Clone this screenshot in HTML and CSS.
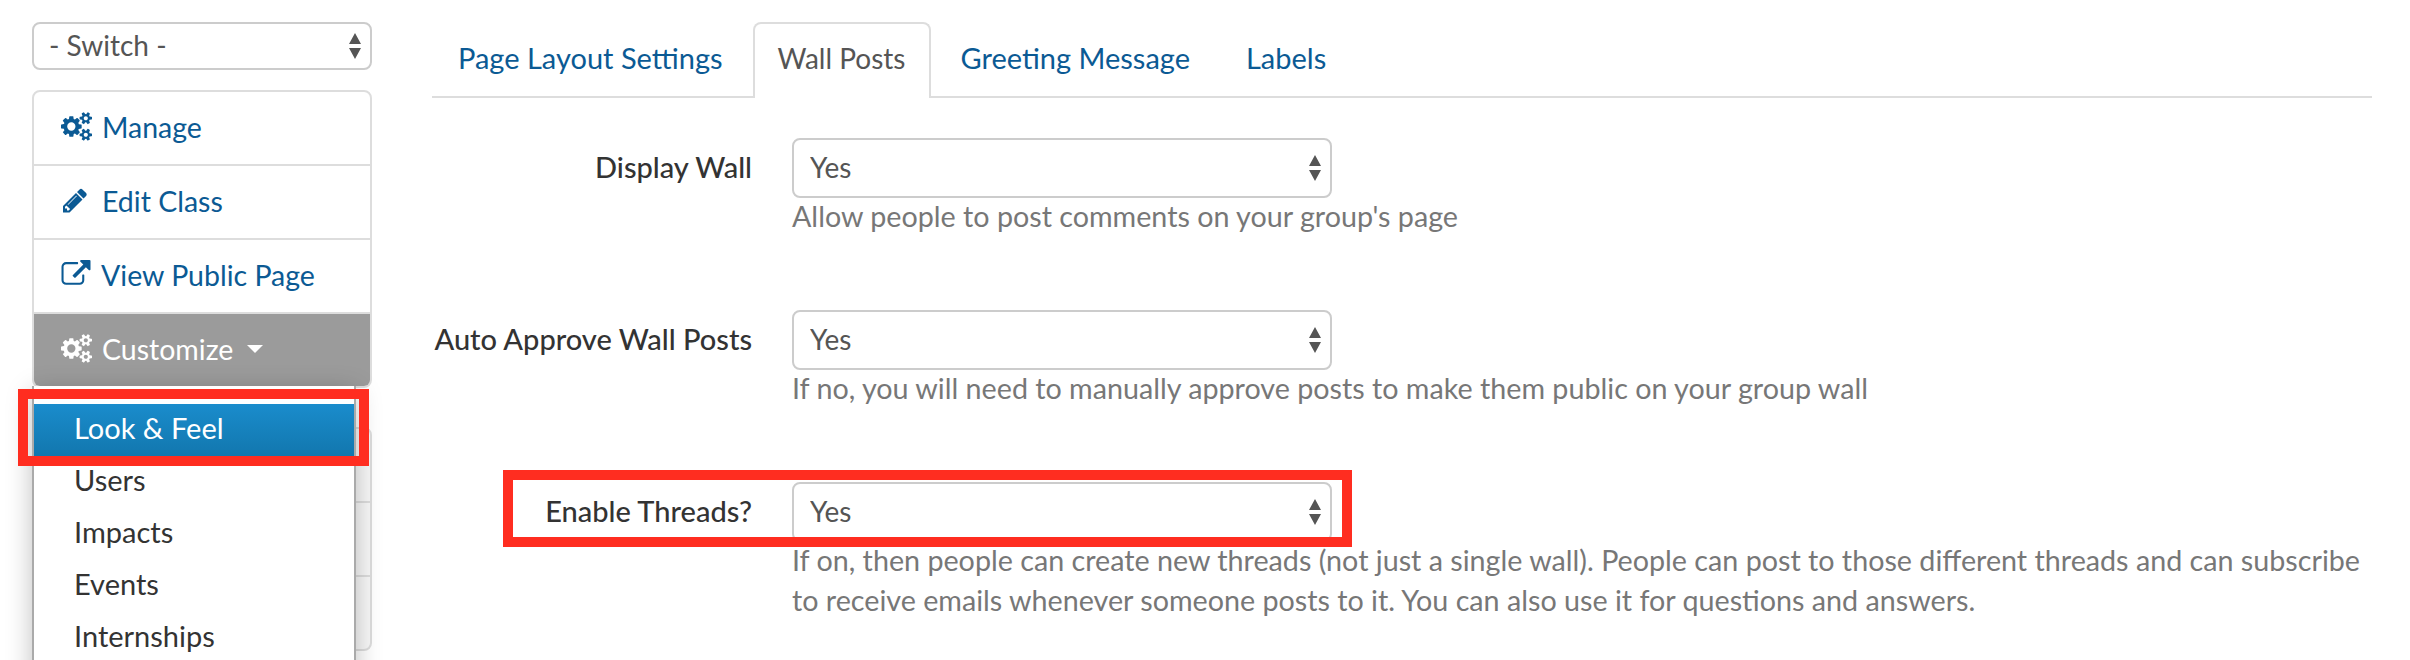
FILE: index.html
```html
<!DOCTYPE html>
<html lang="en">
<head>
    <meta charset="UTF-8">
    <title>Wall Posts</title>
    <link rel="stylesheet" href="styles.css">
</head>
<body>
    <svg class="defs" width="0" height="0">
        <symbol id="cogs" viewBox="0 0 1920 1792"><path d="M896 896q0-106-75-181t-181-75-181 75-75 181 75 181 181 75 181-75 75-181zm768 512q0-52-38-90t-90-38-90 38-38 90q0 53 37.500 90.500t90.500 37.500 90.500-37.500 37.500-90.500zm0-1024q0-52-38-90t-90-38-90 38-38 90q0 53 37.500 90.500t90.500 37.500 90.500-37.500 37.500-90.500zm-384 421v185q0 10-7 19.500t-16 10.500l-155 24q-11 35-32 76 34 48 90 115 7 11 7 20 0 12-7 19-23 30-82.500 89.500t-78.500 59.500q-11 0-21-7l-115-90q-37 19-77 31-11 108-23 155-7 24-30 24h-186q-11 0-20-7.500t-10-17.500l-23-153q-34-10-75-31l-118 89q-7 7-20 7-11 0-21-8-144-133-144-160 0-9 7-19 10-14 41-53t47-61q-23-44-35-82l-152-24q-10-1-17-9.500t-7-19.500v-185q0-10 7-19.500t16-10.500l155-24q11-35 32-76-34-48-90-115-7-11-7-20 0-12 7-20 22-30 82-89t79-59q11 0 21 7l115 90q34-18 77-32 11-108 23-154 7-24 30-24h186q11 0 20 7.500t10 17.500l23 153q34 10 75 31l118-89q8-7 20-7 11 0 21 8 144 133 144 160 0 8-7 19-12 16-42 54t-45 60q23 48 34 82l152 23q10 2 17 10.500t7 19.500zm640 533v140q0 16-149 31-12 27-30 52 51 113 51 138 0 4-4 7-122 71-124 71-8 0-46-47t-52-68q-20 2-30 2t-30-2q-14 21-52 68t-46 47q-2 0-124-71-4-3-4-7 0-25 51-138-18-25-30-52-149-15-149-31v-140q0-16 149-31 13-29 30-52-51-113-51-138 0-4 4-7 4-2 35-20t59-34 30-16q8 0 46 46.500t52 67.500q20-2 30-2t30 2q51-71 92-112l6-2q4 0 124 70 4 3 4 7 0 25-51 138 17 23 30 52 149 15 149 31zm0-1024v140q0 16-149 31-12 27-30 52 51 113 51 138 0 4-4 7-122 71-124 71-8 0-46-47t-52-68q-20 2-30 2t-30-2q-14 21-52 68t-46 47q-2 0-124-71-4-3-4-7 0-25 51-138-18-25-30-52-149-15-149-31v-140q0-16 149-31 13-29 30-52-51-113-51-138 0-4 4-7 4-2 35-20t59-34 30-16q8 0 46 46.500t52 67.500q20-2 30-2t30 2q51-71 92-112l6-2q4 0 124 70 4 3 4 7 0 25-51 138 17 23 30 52 149 15 149 31z"/></symbol>
        <symbol id="pencil" viewBox="0 0 1792 1792"><path d="M491 1536l91-91-235-235-91 91v107h128v128h107zm523-928q0-22-22-22-10 0-17 7l-542 542q-7 7-7 17 0 22 22 22 10 0 17-7l542-542q7-7 7-17zm-54-192l416 416-832 832h-416v-416zm683 96q0 53-37 90l-166 166-416-416 166-165q36-38 90-38 53 0 91 38l235 234q37 39 37 91z"/></symbol>
        <symbol id="external" viewBox="0 0 1792 1792"><path d="M1408 928v320q0 119-84.500 203.500t-203.500 84.500h-832q-119 0-203.500-84.500t-84.500-203.500v-832q0-119 84.500-203.500t203.500-84.500h704q14 0 23 9t9 23v64q0 14-9 23t-23 9h-704q-66 0-113 47t-47 113v832q0 66 47 113t113 47h832q66 0 113-47t47-113v-320q0-14 9-23t23-9h64q14 0 23 9t9 23zm384-864v512q0 26-19 45t-45 19-45-19l-176-176-652 652q-10 10-23 10t-23-10l-114-114q-10-10-10-23t10-23l652-652-176-176q-19-19-19-45t19-45 45-19h512q26 0 45 19t19 45z"/></symbol>
        <symbol id="updown" viewBox="0 0 12 26"><path d="M6 0l6 11H0zM6 26L0 15h12z"/></symbol>
    </svg>

    <aside class="sidebar">
        <div class="select-wrap switch">
            <select><option>- Switch -</option></select>
            <svg class="arrows"><use href="#updown"/></svg>
        </div>

        <ul class="side-nav">
            <li><a href="#"><svg class="icon icon-cogs"><use href="#cogs"/></svg>Manage</a></li>
            <li><a href="#"><svg class="icon icon-pencil"><use href="#pencil"/></svg>Edit Class</a></li>
            <li><a href="#"><svg class="icon icon-external"><use href="#external"/></svg>View Public Page</a></li>
            <li class="open">
                <a href="#"><svg class="icon icon-cogs"><use href="#cogs"/></svg>Customize<span class="caret"></span></a>
                <ul class="menu">
                    <li class="active"><a href="#">Look &amp; Feel</a></li>
                    <li><a href="#">Users</a></li>
                    <li><a href="#">Impacts</a></li>
                    <li><a href="#">Events</a></li>
                    <li><a href="#">Internships</a></li>
                </ul>
                <div class="callout callout-menu"></div>
            </li>
        </ul>

        <ul class="side-nav behind">
            <li></li>
            <li></li>
            <li></li>
        </ul>
    </aside>

    <main class="content">
        <ul class="tabs">
            <li><a href="#">Page Layout Settings</a></li>
            <li class="active"><a href="#">Wall Posts</a></li>
            <li><a href="#">Greeting Message</a></li>
            <li><a href="#">Labels</a></li>
        </ul>

        <form class="settings">
            <div class="form-row">
                <label>Display Wall</label>
                <div class="field">
                    <div class="select-wrap">
                        <select><option>Yes</option></select>
                        <svg class="arrows"><use href="#updown"/></svg>
                    </div>
                    <p class="help">Allow people to post comments on your group's page</p>
                </div>
            </div>
            <div class="form-row">
                <label>Auto Approve Wall Posts</label>
                <div class="field">
                    <div class="select-wrap">
                        <select><option>Yes</option></select>
                        <svg class="arrows"><use href="#updown"/></svg>
                    </div>
                    <p class="help">If no, you will need to manually approve posts to make them public on your group wall</p>
                </div>
            </div>
            <div class="form-row">
                <label>Enable Threads?</label>
                <div class="field">
                    <div class="select-wrap">
                        <select><option>Yes</option></select>
                        <svg class="arrows"><use href="#updown"/></svg>
                    </div>
                    <p class="help">If on, then people can create new threads (not just a single wall). People can post to those different threads and can subscribe<br>to receive emails whenever someone posts to it. You can also use it for questions and answers.</p>
                </div>
                <div class="callout callout-row"></div>
            </div>
        </form>
    </main>
</body>
</html>
```

FILE: styles.css
```css
html, body {
    height: 100%;
}

body {
    font-family: 'Lato', sans-serif;
    font-size: 28.5px;
    background-color: #fff;
    color: #333;
    margin: 0;
    padding: 22px 38px 0 32px;
    box-sizing: border-box;
    display: flex;
    gap: 60px;
    overflow: hidden;
}

ul {
    list-style: none;
    margin: 0;
    padding: 0;
}

a {
    text-decoration: none;
}

.defs {
    position: absolute;
}

/* select boxes */
.select-wrap {
    position: relative;
    width: 540px;
}

.select-wrap select {
    display: block;
    width: 100%;
    height: 60px;
    padding: 0 16px 3px;
    appearance: none;
    background-color: #fff;
    border: 2px solid #ccc;
    border-radius: 8px;
    color: #555;
    font-family: inherit;
    font-size: 28px;
}

.arrows {
    position: absolute;
    top: 17px;
    right: 11px;
    width: 12px;
    height: 26px;
    fill: #555;
}

.switch {
    width: 340px;
}

.switch select {
    height: 48px;
    padding-left: 15px;
}

.switch .arrows {
    top: 11px;
}

/* sidebar */
.sidebar {
    flex: none;
    width: 340px;
}

.side-nav {
    margin-top: 20px;
    border: 2px solid #ddd;
    border-radius: 8px;
}

.side-nav > li {
    position: relative;
    height: 72px;
    border-top: 2px solid #ddd;
}

.side-nav > li:first-child {
    border-top: none;
}

.side-nav > li > a {
    display: flex;
    align-items: center;
    box-sizing: border-box;
    height: 72px;
    padding: 0 0 3px 27px;
    color: #0b5a94;
}

.side-nav > .open > a {
    background-color: #9b9b9b;
    color: #fff;
    border-radius: 0 0 6px 6px;
}

.icon {
    flex: none;
    width: 31px;
    height: 29px;
    margin-right: 10px;
    fill: currentColor;
}

.icon-pencil {
    width: 28px;
    margin-right: 13px;
}

.icon-external {
    width: 30px;
    margin-right: 10px;
}

.caret {
    margin-left: 14px;
    border-top: 8px solid #fff;
    border-left: 8px solid transparent;
    border-right: 8px solid transparent;
}

.behind {
    margin-top: 39px;
    background-color: #f8f8f8;
}

.behind > li {
    height: 72px;
}

/* dropdown over the sidebar */
.menu {
    position: absolute;
    top: 72px;
    left: -2px;
    width: 320px;
    height: 280px;
    padding-top: 18px;
    background-color: #fff;
    border: 2px solid #aaa;
    border-top: none;
    box-shadow: 0 6px 24px rgba(0, 0, 0, 0.25);
    z-index: 5;
}

.menu a {
    display: block;
    height: 52px;
    line-height: 48px;
    padding-left: 40px;
    color: #333;
    font-size: 29px;
}

.menu .active a {
    background: linear-gradient(#1a8ccc, #1277ae);
    color: #fff;
}

/* red marks drawn on the screenshot */
.callout {
    position: absolute;
    box-sizing: border-box;
    border: 10px solid #ff2d20;
    z-index: 10;
}

.callout-menu {
    top: 75px;
    left: -16px;
    width: 351px;
    height: 77px;
}

.callout-row {
    top: -12px;
    left: 71px;
    width: 849px;
    height: 77px;
}

/* main column */
.content {
    flex: 1;
}

.tabs {
    display: flex;
    gap: 4px;
    height: 74px;
    border-bottom: 2px solid #ddd;
}

.tabs li {
    height: 74px;
    box-sizing: border-box;
    border: 2px solid transparent;
    border-bottom: none;
    border-radius: 8px 8px 0 0;
}

.tabs a {
    display: block;
    padding: 0 24px;
    line-height: 68px;
    font-size: 29px;
    color: #0b5a94;
}

.tabs .active {
    height: 76px;
    background-color: #fff;
    border-color: #ddd;
}

.tabs .active a {
    padding: 0 23px;
    font-size: 28px;
    color: #555;
}

.settings {
    margin-top: 40px;
}

.form-row {
    position: relative;
    display: flex;
    gap: 40px;
    height: 100px;
    margin-bottom: 72px;
}

.form-row label {
    flex: none;
    width: 320px;
    line-height: 57px;
    text-align: right;
    font-size: 29px;
    font-weight: 500;
    white-space: nowrap;
}

.help {
    margin: -2px 0 0;
    line-height: 40px;
    font-size: 28.7px;
    color: #777;
    white-space: nowrap;
}
```
